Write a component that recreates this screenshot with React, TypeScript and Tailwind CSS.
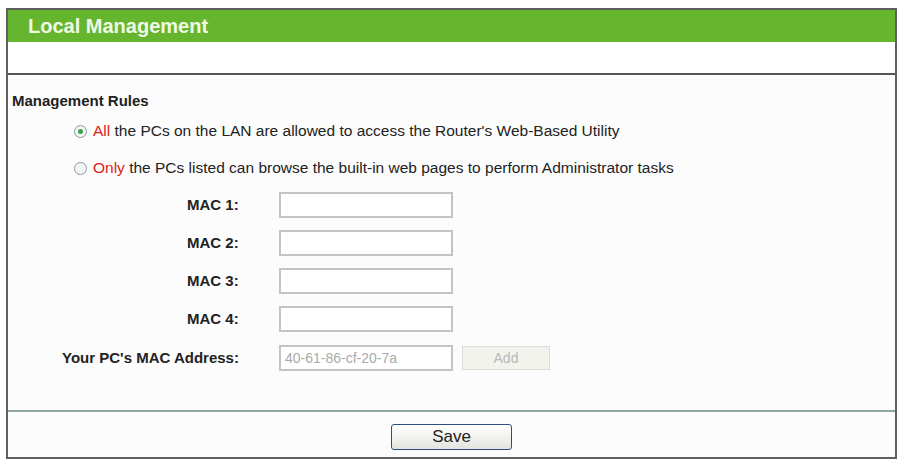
const font = { fontFamily: '"Liberation Sans", Arial, sans-serif' };

function Radio({ checked }: { checked?: boolean }) {
  return (
    <span className="flex h-[13px] w-[13px] shrink-0 items-center justify-center rounded-full border border-[#8798a8] bg-[#f2f5f2]">
      {checked && <span className="h-[5px] w-[5px] rounded-full bg-[#3fa34d]" />}
    </span>
  );
}

function MacRow({ n }: { n: number }) {
  return (
    <div className="flex items-center">
      <div className="w-[271px] pl-[179px] text-[15px] font-bold text-[#222]">MAC {n}:</div>
      <div className="h-[26px] w-[174px] border-2 border-[#c4c4c4] bg-white" />
    </div>
  );
}

export default function App() {
  return (
    <div className="h-[462px] w-[900px] bg-white pt-[8px] pl-[6px]" style={font}>
      <div className="flex h-[451px] w-[891px] flex-col border-2 border-[#5f5f5f] bg-[#fcfcfc]">
        <div className="flex h-[32px] items-center bg-[#66b52f] pl-[20px] text-[20px] leading-[24px] font-bold text-[#eef8e4]">
          Local Management
        </div>
        <div className="h-[33px] border-b-2 border-[#555] bg-white" />
        <div className="flex flex-col text-[15px] leading-[18px] text-[#222]">
          <div className="mt-[17px] pl-[4px] font-bold">Management Rules</div>
          <div className="mt-[12px] flex items-center gap-[6px] pl-[66px]">
            <Radio checked />
            <span className="text-[15.5px]">
              <span className="text-[#e02020]">All</span> the PCs on the LAN are allowed to access the Router's Web-Based Utility
            </span>
          </div>
          <div className="mt-[19px] flex items-center gap-[6px] pl-[66px]">
            <Radio />
            <span className="text-[15.5px]">
              <span className="text-[#e02020]">Only</span> the PCs listed can browse the built-in web pages to perform Administrator tasks
            </span>
          </div>
          <div className="mt-[15px] flex flex-col gap-[12px]">
            <MacRow n={1} />
            <MacRow n={2} />
            <MacRow n={3} />
            <MacRow n={4} />
          </div>
          <div className="mt-[13px] flex items-center">
            <div className="w-[271px] pl-[54px] font-bold">Your PC's MAC Address:</div>
            <div className="flex h-[26px] w-[174px] items-center border-2 border-[#c4c4c4] bg-white pl-[4px] text-[14px] text-[#aaa]">
              40-61-86-cf-20-7a
            </div>
            <div className="ml-[9px] flex h-[24px] w-[88px] items-center justify-center border border-[#dcdcd4] bg-[#f3f3ee] text-[14px] text-[#b8b8b8]">
              Add
            </div>
          </div>
        </div>
        <div className="mt-[39px] border-b-2 border-[#8fa89a]" />
        <div className="flex flex-1 items-start justify-center pt-[12px]">
          <div className="flex h-[26px] w-[121px] items-center justify-center rounded-[3px] border border-[#2f4d7c] bg-gradient-to-b from-white to-[#e4e4de] text-[17px] text-[#222]">
            Save
          </div>
        </div>
      </div>
    </div>
  );
}
